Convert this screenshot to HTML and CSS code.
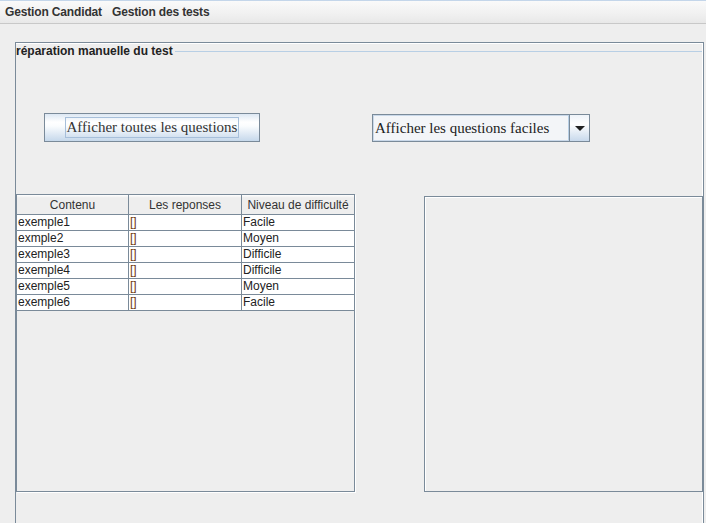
FILE: index.html
```html
<!DOCTYPE html>
<html lang="fr">
<head>
  <meta charset="UTF-8">
  <title>Gestion des tests</title>
  <link rel="stylesheet" href="styles.css">
</head>
<body>
  <div class="menubar">
    <span class="menu">Gestion Candidat</span>
    <span class="menu">Gestion des tests</span>
  </div>

  <div class="panel">
    <div class="titled">
      <span class="title">réparation manuelle du test</span>
      <span class="title-line"></span>
    </div>

    <div class="actions">
      <div class="btn"><span class="focus">Afficher toutes les questions</span></div>
      <div class="combo">
        <span class="combo-text">Afficher les questions faciles</span>
        <span class="combo-arrow"><span class="tri"></span></span>
      </div>
    </div>

    <div class="content">
      <div class="scroll">
        <table class="grid">
          <colgroup><col class="c1"><col class="c2"><col class="c3"></colgroup>
          <thead>
            <tr><th>Contenu</th><th>Les reponses</th><th>Niveau de difficulté</th></tr>
          </thead>
          <tbody>
            <tr><td>exemple1</td><td class="rep">[]</td><td>Facile</td></tr>
            <tr><td>exmple2</td><td class="rep">[]</td><td>Moyen</td></tr>
            <tr><td>exemple3</td><td class="rep">[]</td><td>Difficile</td></tr>
            <tr><td>exemple4</td><td class="rep">[]</td><td>Difficile</td></tr>
            <tr><td>exemple5</td><td class="rep">[]</td><td>Moyen</td></tr>
            <tr><td>exemple6</td><td class="rep">[]</td><td>Facile</td></tr>
          </tbody>
        </table>
      </div>
      <div class="side"></div>
    </div>
  </div>
</body>
</html>
```

FILE: styles.css
```css
body { margin: 0; background: #eeeeee; font-family: "Liberation Sans", Arial, sans-serif; font-size: 12px; color: #333; height: 523px; overflow: hidden; }

/* barre de menu */
.menubar { height: 24px; border-top: 1px solid #c4d6ea; border-bottom: 1px solid #c8c8c8; background: linear-gradient(#fafafa, #f0f0f0 60%, #e8e8e8); display: flex; align-items: center; padding-left: 5px; gap: 10px; box-sizing: border-box; }
.menu { font-weight: bold; color: #333; letter-spacing: -0.15px; }

/* panneau principal */
.panel { margin: 18px 2px 0 15px; border: 1px solid #7a8a99; border-bottom: none; height: 600px; box-shadow: inset -1px 1px 0 #fff; }
.titled { display: flex; align-items: center; height: 16px; }
.title { font-weight: bold; color: #222; white-space: nowrap; padding-right: 2px; }
.title-line { flex: 1; height: 1px; background: #b8cfe5; margin-right: 1px; }

.actions { display: flex; align-items: flex-start; margin-top: 54px; }
.btn { margin-left: 28px; width: 216px; height: 29px; box-sizing: border-box; border: 1px solid #7a8a99; background: linear-gradient(#dce7f3, #ffffff 30%, #fafcfe 45%, #c6d8eb); display: flex; align-items: center; justify-content: center; font-family: "Liberation Serif", "Times New Roman", serif; font-size: 15px; color: #333; }
.focus { border: 1px solid #a7bfda; padding: 0 1px; line-height: 19px; }
.combo { margin-left: 112px; margin-top: 1px; width: 218px; height: 28px; box-sizing: border-box; border: 1px solid #7a8a99; display: flex; background: #eef1f5; }
.combo-text { flex: 1; border: 1px solid #c9d8e9; border-right-color: #b8cfe5; display: flex; align-items: center; padding-left: 1px; font-family: "Liberation Serif", "Times New Roman", serif; font-size: 15px; color: #222; background: #f3f5f8; }
.combo-arrow { width: 19px; border-left: 1px solid #7a8a99; background: linear-gradient(#eef3f9, #ffffff 35%, #c8d9ec); display: flex; align-items: center; justify-content: center; }
.tri { width: 0; height: 0; border-left: 5px solid transparent; border-right: 5px solid transparent; border-top: 5px solid #222; }

/* tableau et panneau droit */
.content { display: flex; align-items: flex-start; margin-top: 52px; }
.scroll { width: 339px; height: 298px; box-sizing: border-box; border: 1px solid #7a8a99; box-shadow: 1px 1px 0 #fff; background: #eeeeee; }
.grid { border-collapse: separate; border-spacing: 0; table-layout: fixed; width: 337px; }
.c1 { width: 112px; }
.c2 { width: 113px; }
.c3 { width: 112px; }
.grid th { height: 19px; padding: 0; font-weight: normal; color: #333; text-align: center; background: linear-gradient(#ffffff, #eeeeee 15%); border-right: 1px solid #7a8a99; border-bottom: 1px solid #7a8a99; white-space: nowrap; overflow: hidden; }
.grid td { height: 15px; padding: 0 0 0 1px; line-height: 15px; background: #fff; color: #222; border-right: 1px solid #7a8a99; border-bottom: 1px solid #7a8a99; white-space: nowrap; overflow: hidden; }
.grid th:last-child, .grid td:last-child { border-right: none; }
.grid td.rep { color: #6b3a10; }
.side { margin-left: 69px; margin-top: 2px; width: 280px; height: 296px; box-sizing: border-box; border: 1px solid #7a8a99; box-shadow: inset 1px 1px 0 #fff; }
```
